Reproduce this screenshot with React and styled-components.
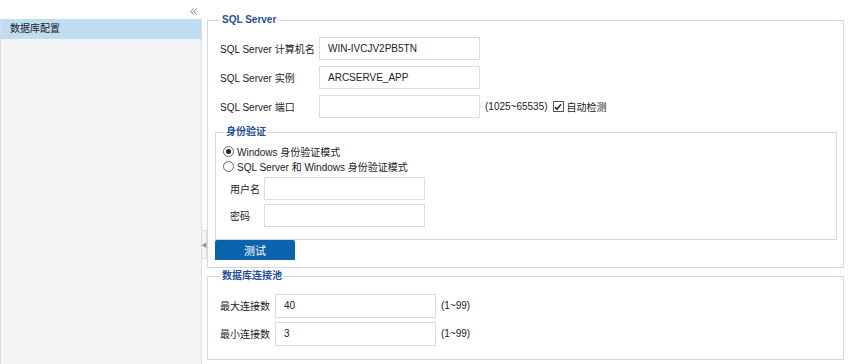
import React from "react";
import styled, { createGlobalStyle } from "styled-components";

const GlobalStyle = createGlobalStyle`
	html, body {
		margin: 0;
		padding: 0;
		background: #fff;
	}
	body {
		font-family: "Liberation Sans", Arial, "Noto Sans CJK SC", sans-serif;
		font-size: 10px;
		color: #222;
	}
`;

const Page = styled.div`
	display: flex;
	width: 850px;
	height: 364px;
	overflow: hidden;
`;

const Sidebar = styled.div`
	width: 202px;
	display: flex;
	flex-direction: column;
`;

const CollapseRow = styled.div`
	height: 19px;
	display: flex;
	justify-content: flex-end;
	align-items: flex-end;
	padding: 0 5px 4px 0;
	box-sizing: border-box;
`;

const NavPanel = styled.div`
	flex: 1;
	background: #f5f5f5;
	border: 1px solid #dcdce6;
	border-top: none;
	border-bottom: none;
`;

const NavItem = styled.div`
	height: 20px;
	line-height: 20px;
	padding-left: 9px;
	background: ${(p) => (p.active ? "#bfdcf0" : "transparent")};
	color: #222;
`;

const Splitter = styled.div`
	width: 5px;
	display: flex;
	flex-direction: column;
`;

const SplitHandle = styled.div`
	margin-top: 230px;
	height: 27px;
	width: 4px;
	border: 1px solid #dcdce6;
	border-left: none;
	background: #f5f5f5;
	display: flex;
	align-items: center;
	justify-content: center;
	color: #999;
	font-size: 6px;
`;

const Main = styled.div`
	flex: 1;
	padding: 13px 6px 0 0;
	display: flex;
	flex-direction: column;
	gap: 1px;
`;

const Group = styled.fieldset`
	margin: 0;
	border: 1px solid #d6d6e0;
	padding: ${(p) => p.pad || "0 0 0 12px"};
	min-width: 0;
	height: ${(p) => p.h}px;
	box-sizing: border-box;
`;

const Legend = styled.legend`
	padding: 0 2px;
	color: #1f4e9a;
	font-weight: bold;
	font-size: 10px;
	line-height: 14px;
`;

const Row = styled.div`
	display: flex;
	align-items: center;
	height: 23px;
	margin-top: ${(p) => p.mt || 0}px;
`;

const Label = styled.div`
	width: ${(p) => p.w}px;
	flex-shrink: 0;
`;

const Input = styled.div`
	width: 161px;
	height: ${(p) => p.h || 23}px;
	box-sizing: border-box;
	border: 1px solid #dcdcdc;
	background: #fff;
	padding-left: 8px;
	display: flex;
	align-items: center;
	color: #222;
`;

const Hint = styled.span`
	margin-left: 5px;
`;

const CheckLabel = styled.label`
	display: flex;
	align-items: center;
	margin-left: 5px;
	gap: 3px;
`;

const CheckBox = styled.span`
	width: 9px;
	height: 9px;
	border: 1px solid #555;
	display: inline-flex;
	align-items: center;
	justify-content: center;
	background: #fff;
`;

const AuthBox = styled.div`
	margin: 7px 6px 0 -5px;
`;

const RadioRow = styled.div`
	display: flex;
	align-items: center;
	gap: 3px;
	height: 15px;
	margin-left: -1px;
	margin-top: ${(p) => p.mt || 0}px;
`;

const Radio = styled.span`
	width: 9px;
	height: 9px;
	border-radius: 50%;
	border: 1px solid #666;
	background: #fff;
	display: inline-flex;
	align-items: center;
	justify-content: center;
	&::after {
		content: "";
		width: 5px;
		height: 5px;
		border-radius: 50%;
		background: ${(p) => (p.checked ? "#222" : "transparent")};
	}
`;

const Credentials = styled.div`
	padding-left: 6px;
	margin-top: 3px;
	display: flex;
	flex-direction: column;
	gap: 4px;
`;

const TestButton = styled.button`
	display: block;
	width: 80px;
	height: 20px;
	border: none;
	border-radius: 2px 2px 0 0;
	background: #0b62ad;
	color: #fff;
	font-family: inherit;
	font-size: 11px;
	padding: 0;
`;

const Collapse = () => (
	<svg width="7" height="7" viewBox="0 0 7 7" fill="none" stroke="#888" strokeWidth="1">
		<path d="M3.5 0.5L0.8 3.5L3.5 6.5M6.5 0.5L3.8 3.5L6.5 6.5" />
	</svg>
);

const Check = () => (
	<svg width="8" height="8" viewBox="0 0 8 8" fill="none" stroke="#222" strokeWidth="1.4">
		<path d="M1 4L3 6.3L7 1.2" />
	</svg>
);

export default function App() {
	return (
		<>
			<GlobalStyle />
			<Page>
				<Sidebar>
					<CollapseRow>
						<Collapse />
					</CollapseRow>
					<NavPanel>
						<NavItem active>数据库配置</NavItem>
					</NavPanel>
				</Sidebar>
				<Splitter>
					<SplitHandle>◀</SplitHandle>
				</Splitter>
				<Main>
					<Group h={255}>
						<Legend>SQL Server</Legend>
						<Row mt={10}>
							<Label w={99}>SQL Server 计算机名</Label>
							<Input>WIN-IVCJV2PB5TN</Input>
						</Row>
						<Row mt={6}>
							<Label w={99}>SQL Server 实例</Label>
							<Input>ARCSERVE_APP</Input>
						</Row>
						<Row mt={6}>
							<Label w={99}>SQL Server 端口</Label>
							<Input />
							<Hint>(1025~65535)</Hint>
							<CheckLabel>
								<CheckBox>
									<Check />
								</CheckBox>
								自动检测
							</CheckLabel>
						</Row>
						<AuthBox>
							<Group h={115} pad="0 0 0 8px">
								<Legend>身份验证</Legend>
								<RadioRow mt={5}>
									<Radio checked />
									Windows 身份验证模式
								</RadioRow>
								<RadioRow>
									<Radio />
									SQL Server 和 Windows 身份验证模式
								</RadioRow>
								<Credentials>
									<Row>
										<Label w={34}>用户名</Label>
										<Input />
									</Row>
									<Row>
										<Label w={34}>密码</Label>
										<Input />
									</Row>
								</Credentials>
							</Group>
							<TestButton>测试</TestButton>
						</AuthBox>
					</Group>
					<Group h={91}>
						<Legend>数据库连接池</Legend>
						<Row mt={11}>
							<Label w={55}>最大连接数</Label>
							<Input h={24}>40</Input>
							<Hint>(1~99)</Hint>
						</Row>
						<Row mt={5}>
							<Label w={55}>最小连接数</Label>
							<Input h={24}>3</Input>
							<Hint>(1~99)</Hint>
						</Row>
					</Group>
				</Main>
			</Page>
		</>
	);
}
